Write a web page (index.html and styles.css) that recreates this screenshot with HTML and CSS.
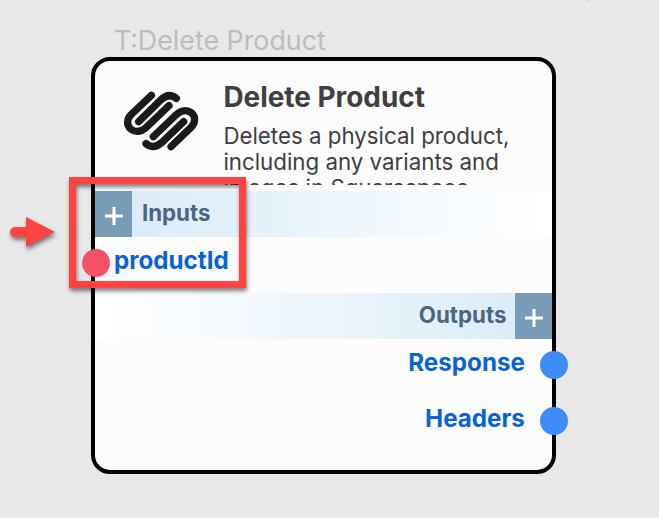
FILE: index.html
```html
<!DOCTYPE html>
<html lang="en">
<head>
<meta charset="utf-8">
<title>Delete Product</title>
<link rel="stylesheet" href="styles.css">
</head>
<body>
<main class="canvas">
  <div class="speck"></div>
  <div class="node-label"><span>T:Delete Product</span></div>
  <section class="node">
    <header class="node-head">
      <svg class="logo" viewBox="0 0 300 240" aria-hidden="true">
        <path d="M124 46 64 103C50 117 49 136 62 147C77 159 94 155 108 143L177 77"/>
        <path d="M86 125 151 61C165 47 181 40 199 55"/>
        <path d="M130 170 199 104C213 91 230 88 245 99C257 110 257 128 243 142L183 200"/>
        <path d="M108 191C126 206 142 200 157 186L221 125"/>
      </svg>
      <div class="summary">
        <h1><span>Delete Product</span></h1>
        <p>Deletes a physical product,<br>including any variants and<br>images in Squarespace.</p>
      </div>
    </header>
    <div class="band inputs">
      <span class="add"><svg viewBox="0 0 20 20"><path d="M1 10H19M10 1V19"/></svg></span>
      <span class="band-name">Inputs</span>
    </div>
    <div class="port port-in"><span>productId</span><i class="dot"></i></div>
    <div class="band outputs">
      <span class="band-name">Outputs</span>
      <span class="add"><svg viewBox="0 0 20 20"><path d="M1 10H19M10 1V19"/></svg></span>
    </div>
    <div class="port port-out"><span>Response</span><i class="dot"></i></div>
    <div class="port port-out"><span>Headers</span><i class="dot"></i></div>
  </section>
  <div class="callout"></div>
  <svg class="arrow" viewBox="0 0 60 44" aria-hidden="true"><path d="M15 17H26V7L55 22 26 37V27H15A5 5 0 0 1 15 17Z"/></svg>
</main>
</body>
</html>
```

FILE: styles.css
```css
* { box-sizing: border-box; }
body { margin: 0; font-family: Inter, sans-serif; }
.canvas {
  position: relative;
  width: 659px;
  height: 518px;
  padding: 24px 0 0 91.4px;
  overflow: hidden;
  background: #e8e8e8;
}
.speck { position: absolute; left: 586px; top: 0; width: 4px; height: 1px; background: #dadada; }
.node-label {
  height: 33px;
  padding-left: 22.5px;
  font-size: 26.8px;
  line-height: 33px;
  color: #bdbdbd;
  white-space: nowrap;
}
.node {
  width: 465px;
  height: 416.5px;
  border: 4px solid #000;
  border-radius: 19px;
  background: #fcfcfc;
}
.node-head { display: flex; height: 130px; padding-left: 14.8px; }
.logo { flex: none; width: 100px; height: 80px; margin-top: 19px; fill: none; stroke: #1b1a18; stroke-width: 22; stroke-linecap: round; stroke-linejoin: round; }
.summary { height: 124px; margin-left: 13.2px; padding-top: 19px; overflow: hidden; color: #3e3f41; white-space: nowrap; }
.summary h1 { margin: 0; font-size: 27.9px; line-height: 34px; font-weight: 700; }
.summary p { margin: 9px 0 0; font-size: 22.3px; line-height: 26px; }
.band { display: flex; height: 46px; color: #4a6585; font-size: 22.3px; line-height: 43px; font-weight: 700; }
.inputs { background: linear-gradient(90deg, #d9eaf7, #e6f2fa 40%, #f5fafe 72%, #fff); }
.outputs { margin-top: 56px; justify-content: flex-end; background: linear-gradient(270deg, #d9eaf7, #e6f2fa 35%, #f5fafe 72%, #fff); }
.add { display: flex; align-items: center; justify-content: center; width: 37px; background: #789bb7; }
.add svg { width: 20px; height: 20px; margin-top: 3px; fill: none; stroke: #fff; stroke-width: 3; }
.inputs .band-name { margin-left: 9.5px; }
.outputs .band-name { margin-right: 9px; }
.port { position: relative; height: 56px; font-size: 24.2px; line-height: 48px; font-weight: 700; color: #0763d5; }
.port-in { margin-bottom: -56px; padding-left: 18.5px; }
.port-out { padding-right: 27.5px; text-align: right; }
.dot { position: absolute; width: 28px; height: 28px; border-radius: 50%; }
.port-in .dot { left: -13.2px; top: 11.5px; background: #f35165; }
.port-out .dot { right: -15.2px; top: 11.7px; background: #408bfa; }
.callout {
  position: absolute;
  left: 69px;
  top: 177px;
  width: 177px;
  height: 111px;
  border: 7px solid #ff4343;
  filter: drop-shadow(1px 3px 2px rgba(0, 0, 0, .5));
}
.arrow { position: absolute; left: 0; top: 210px; width: 60px; height: 44px; overflow: visible; fill: #ff4343; filter: drop-shadow(1px 3px 2px rgba(0, 0, 0, .5)); }
```
